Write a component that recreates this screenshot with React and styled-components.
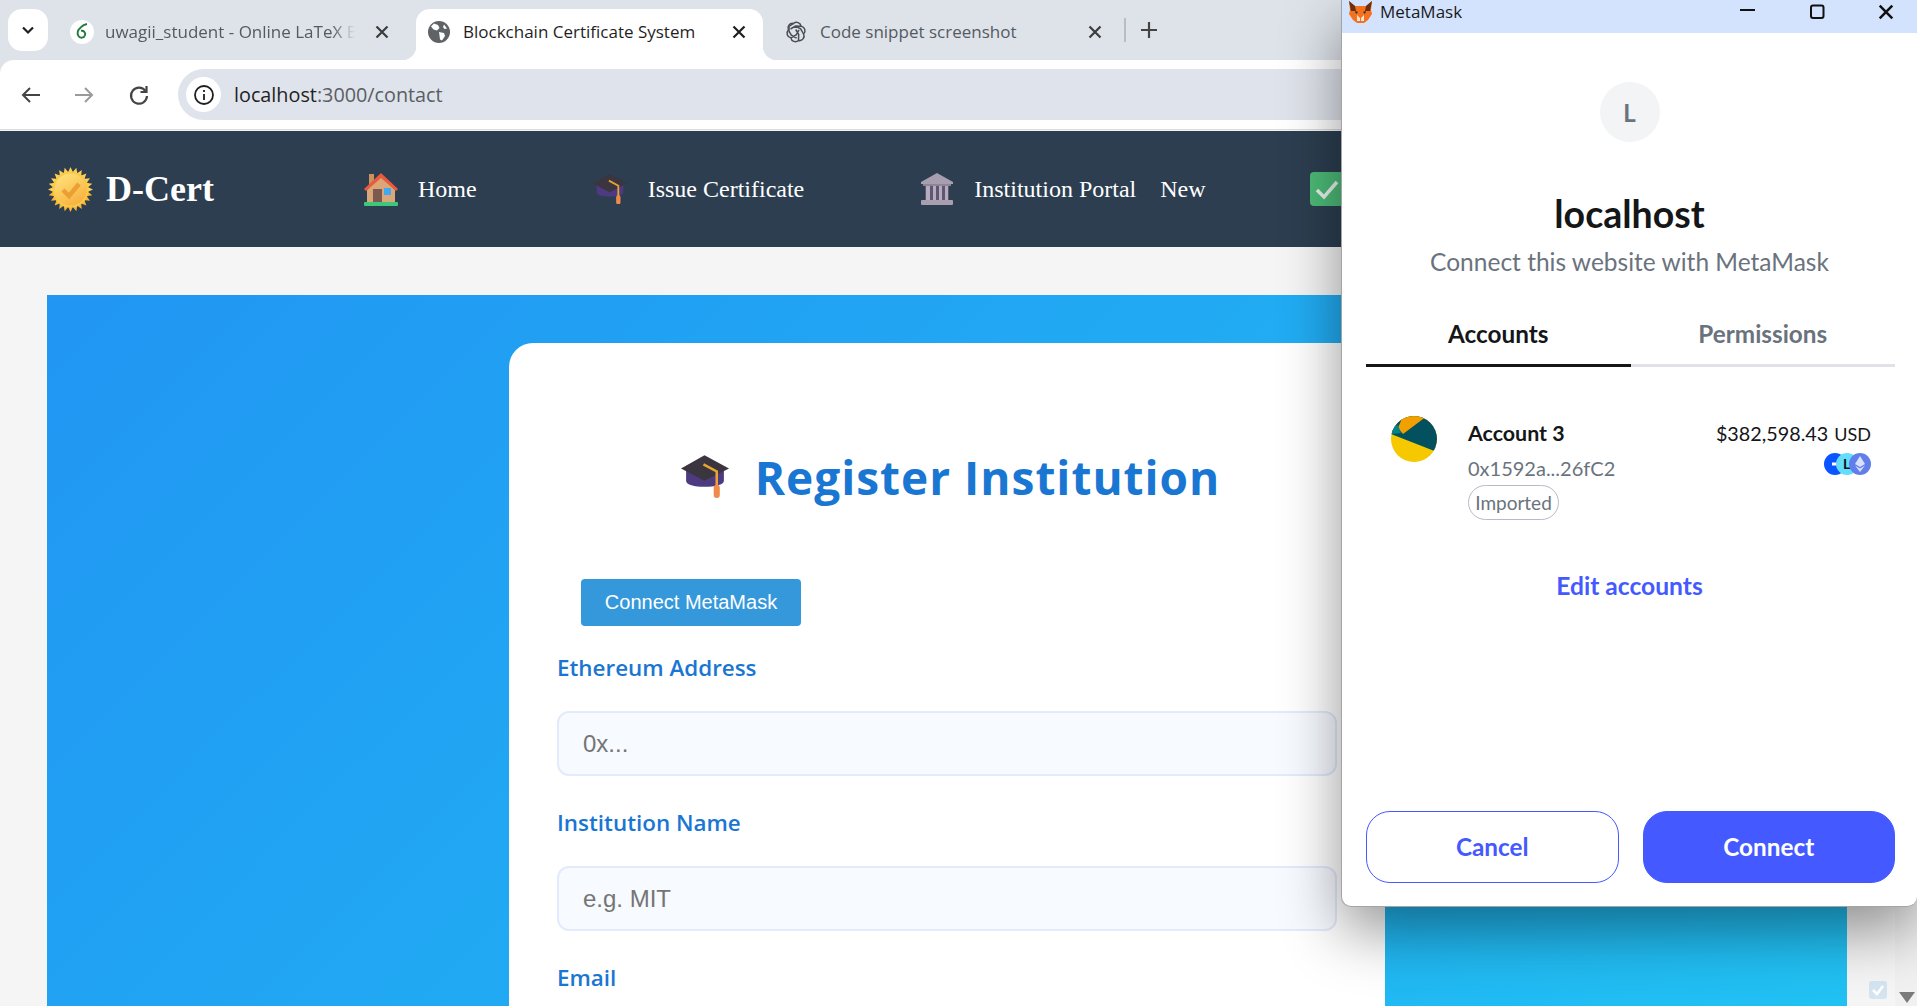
import styled, { createGlobalStyle } from "styled-components"

const GlobalStyle = createGlobalStyle`
    html, body {
        margin:0;
        padding:0;
        height:1006px;
        overflow:hidden;
        background:#f5f5f5;
    }
    * { box-sizing:border-box; }
`;

const UI = `"Open Sans", "Noto Sans", sans-serif`;
const MM = `Lato, "Open Sans", sans-serif`;

const Screen = styled.div`
    position:relative;
    width:1917px;
    height:1006px;
    overflow:hidden;
    background:#f5f5f5;
`;

/* browser chrome */
const BrowserChrome = styled.div`
    background:#dee3ea;
    font-family:${UI};
`;

const TabStrip = styled.div`
    height:60px;
    display:flex;
    align-items:flex-end;
    padding-left:8px;
`;

const TabMenu = styled.div`
    width:40px;
    height:42px;
    margin-bottom:9px;
    margin-right:15px;
    background:#fff;
    border-radius:14px;
    display:flex;
    align-items:center;
    justify-content:center;
`;

const Tab = styled.div`
    position:relative;
    width:${(props) => props.$width}px;
    height:51px;
    display:flex;
    align-items:center;
    padding:0 ${(props) => props.$padRight}px 6px ${(props) => props.$pad}px;
    border-radius:14px 14px 0 0;
    background:${(props) => (props.$active ? "#fff" : "transparent")};
    color:${(props) => (props.$active ? "#1f1f1f" : "#555a60")};
    font-size:17px;

    ${(props) => props.$active && `
        &::before, &::after {
            content:"";
            position:absolute;
            bottom:0;
            width:14px;
            height:14px;
        }
        &::before {
            left:-14px;
            background:radial-gradient(circle at 0 0, transparent 14px, #fff 14.5px);
        }
        &::after {
            right:-14px;
            background:radial-gradient(circle at 100% 0, transparent 14px, #fff 14.5px);
        }
    `}
`;

const TabIcon = styled.div`
    width:24px;
    height:24px;
    flex:none;
    margin-right:${(props) => props.$gap}px;
`;

const TabTitle = styled.div`
    flex:1;
    white-space:nowrap;
    overflow:hidden;
    ${(props) => props.$fade && `
        -webkit-mask-image:linear-gradient(90deg, #000 88%, transparent 97%);
        mask-image:linear-gradient(90deg, #000 88%, transparent 97%);
        margin-right:12px;
    `}
`;

const TabDivider = styled.div`
    width:2px;
    height:24px;
    margin:0 13px 18px 0;
    background:#b9bdc3;
`;

const NewTab = styled.div`
    width:20px;
    height:20px;
    margin-bottom:20px;
`;

const Toolbar = styled.div`
    height:70px;
    background:#fff;
    border-radius:14px 14px 0 0;
    border-bottom:1px solid #dcdcdc;
    display:flex;
    align-items:center;
    padding-left:19px;
`;

const NavButton = styled.div`
    width:24px;
    height:24px;
    margin-right:${(props) => props.$gap}px;
    flex:none;
`;

const Omnibox = styled.div`
    flex:1;
    height:51px;
    background:#dfe3eb;
    border-radius:26px 0 0 26px;
    display:flex;
    align-items:center;
    padding-left:8px;
    font-size:19.8px;
    color:#5a5e64;
`;

const InfoChip = styled.div`
    width:35px;
    height:35px;
    border-radius:50%;
    background:#fff;
    margin-right:13px;
    display:flex;
    align-items:center;
    justify-content:center;
`;

const Host = styled.span`
    color:#1f1f1f;
`;

/* d-cert navbar */
const Navbar = styled.nav`
    height:116px;
    margin-top:1px;
    background:#2c3e50;
    display:flex;
    align-items:center;
    padding-left:48px;
    font-family:"Liberation Serif", serif;
    color:#fff;
`;

const Brand = styled.div`
    display:flex;
    align-items:center;
    gap:13px;
    width:316px;
    font-size:36px;
    font-weight:700;
`;

const NavItem = styled.div`
    display:flex;
    align-items:center;
    gap:${(props) => props.$gap}px;
    margin-right:${(props) => props.$right}px;
    font-size:24px;
    white-space:nowrap;
`;

const NewLabel = styled.span`
    margin-left:24px;
`;

/* page */
const Panel = styled.div`
    margin:48px 0 0 47px;
    width:1800px;
    height:1300px;
    padding-top:48px;
    background:linear-gradient(135deg, #2196f3, #21cbf3);
`;

const Card = styled.div`
    width:876px;
    margin:0 auto;
    height:1100px;
    padding:106px 48px 0;
    background:#fff;
    border-radius:24px;
    font-family:${UI};
`;

const Title = styled.h1`
    margin:0 0 74px;
    padding-left:7px;
    height:56px;
    display:flex;
    align-items:center;
    justify-content:center;
    gap:26px;
    font-size:46px;
    font-weight:700;
    letter-spacing:1px;
    color:#1976d2;
`;

const ConnectMeta = styled.button`
    display:block;
    width:220px;
    height:47px;
    margin:0 0 27px 24px;
    border:none;
    border-radius:4px;
    background:#3498db;
    color:#fff;
    font-family:"Liberation Sans", sans-serif;
    font-size:20px;
`;

const Field = styled.div`
    height:155px;
`;

const Label = styled.div`
    height:30px;
    line-height:30px;
    margin-bottom:28px;
    font-size:22.4px;
    font-weight:600;
    color:#1976d2;
`;

const Input = styled.div`
    height:65px;
    border:2px solid #e3eafc;
    border-radius:12px;
    background:#f7faff;
    display:flex;
    align-items:center;
    padding-left:24px;
    font-family:"Liberation Sans", sans-serif;
    font-size:24px;
    color:#757575;
`;

const ScrollTrack = styled.div`
    position:absolute;
    right:0;
    top:131px;
    bottom:0;
    width:22px;
    background:#f1f1f1;
`;

const CornerCheck = styled.div`
    position:absolute;
    left:1869px;
    top:981px;
    width:18px;
    height:18px;
    border-radius:3px;
    background:#d5e4f1;
    display:flex;
    align-items:center;
    justify-content:center;
`;

const ScrollArrow = styled.div`
    position:absolute;
    left:1899px;
    top:992px;
    width:0;
    height:0;
    border-left:8px solid transparent;
    border-right:8px solid transparent;
    border-top:11px solid #7b7b7b;
`;

/* metamask popup */
const Popup = styled.div`
    position:absolute;
    left:1341px;
    top:0;
    width:576px;
    height:907px;
    display:flex;
    flex-direction:column;
    background:#fff;
    border:1px solid #a4a4a4;
    border-width:0 0 1px 1px;
    border-radius:0 0 10px 10px;
    box-shadow:0 24px 60px rgba(0,0,0,.42);
    font-family:${MM};
`;

const TitleBar = styled.div`
    height:33px;
    flex:none;
    background:#d3e3fd;
    display:flex;
    align-items:center;
    padding:0 23px 9px 7px;
    font-family:${UI};
    font-size:17px;
    color:#1a1a1a;
`;

const TitleText = styled.div`
    flex:1;
    margin-left:8px;
    margin-top:-2px;
`;

const WinButton = styled.div`
    width:16px;
    height:16px;
    margin-left:${(props) => props.$left}px;
    display:flex;
    align-items:center;
`;

const Origin = styled.div`
    display:flex;
    flex-direction:column;
    align-items:center;
`;

const Avatar = styled.div`
    width:60px;
    height:60px;
    margin-top:49px;
    border-radius:50%;
    background:#f2f4f6;
    color:#6a737d;
    font-size:24px;
    font-weight:700;
    display:flex;
    align-items:center;
    justify-content:center;
`;

const Host2 = styled.div`
    margin-top:50px;
    height:44px;
    line-height:44px;
    font-size:37.5px;
    font-weight:700;
    color:#141618;
`;

const Sub = styled.div`
    margin-top:11px;
    height:30px;
    line-height:30px;
    font-size:24.5px;
    color:#6a737d;
`;

const Tabs = styled.div`
    display:flex;
    margin:35px 22px 0 24px;
    border-bottom:3px solid #e0e2e8;
`;

const TabBtn = styled.div`
    flex:1;
    height:55px;
    margin-bottom:-3px;
    border-bottom:3px solid ${(props) => (props.$active ? "#141618" : "transparent")};
    display:flex;
    align-items:center;
    justify-content:center;
    padding-bottom:10px;
    font-size:24.3px;
    font-weight:700;
    color:${(props) => (props.$active ? "#141618" : "#6a737d")};
`;

const AccountRow = styled.div`
    display:flex;
    margin:49px 46px 0 49px;
`;

const Blockie = styled.div`
    width:46px;
    height:46px;
    flex:none;
    margin-right:31px;
`;

const AccountInfo = styled.div`
    flex:1;
`;

const AccountName = styled.div`
    height:36px;
    line-height:34px;
    font-size:21.4px;
    font-weight:700;
    color:#141618;
`;

const Address = styled.div`
    height:33px;
    line-height:32px;
    font-size:20px;
    color:#6a737d;
`;

const Pill = styled.div`
    width:91px;
    height:35px;
    border:1px solid #b7bbc8;
    border-radius:18px;
    display:flex;
    align-items:center;
    justify-content:center;
    font-size:19px;
    color:#6a737d;
`;

const Balance = styled.div`
    display:flex;
    flex-direction:column;
    align-items:flex-end;
`;

const Amount = styled.div`
    height:37px;
    line-height:34px;
    font-size:19.8px;
    color:#141618;
`;

const Usd = styled.span`
    margin-left:6px;
    font-size:18px;
`;

const EditLink = styled.div`
    margin-top:51px;
    text-align:center;
    font-size:24.6px;
    font-weight:700;
    color:#4459ff;
`;

const Footer = styled.div`
    display:flex;
    gap:24px;
    margin:auto 22px 23px 24px;
`;

const FootButton = styled.div`
    flex:1;
    height:72px;
    padding-bottom:2px;
    border-radius:24px;
    border:1px solid #4459ff;
    background:${(props) => (props.$primary ? "#4459ff" : "#fff")};
    color:${(props) => (props.$primary ? "#fff" : "#4459ff")};
    display:flex;
    align-items:center;
    justify-content:center;
    font-size:24.3px;
    font-weight:700;
`;

const Chevron = () => (
    <svg width="16" height="16" viewBox="0 0 16 16" fill="none" stroke="#1f1f1f" strokeWidth="2.2">
        <path d="M3 5.5l5 5 5-5" />
    </svg>
)

const CloseIcon = ({ color = "#3c3c3c", size = 14 }) => (
    <svg width={size} height={size} viewBox="0 0 14 14" stroke={color} strokeWidth="2.2" style={{ flex: "none" }}>
        <path d="M1.5 1.5l11 11M12.5 1.5l-11 11" />
    </svg>
)

const OverleafIcon = () => (
    <svg width="24" height="24" viewBox="0 0 24 24">
        <circle cx="12" cy="12" r="12" fill="#fff" />
        <path d="M17 4c-3 .6-4.5 1.600-6 3.200C7.500 10 7 13.500 8.500 16c1.600 2.500 5.500 2.200 6.500-.8 .8-2.600-1.200-5-4-4.400" fill="none" stroke="#1f7a3d" strokeWidth="1.900" />
    </svg>
)

const GlobeIcon = () => (
    <svg width="24" height="24" viewBox="0 0 24 24">
        <circle cx="12" cy="12" r="11" fill="#5f6368" />
        <path d="M7 3.500l4 1.500 1.500 3-2.500 2.500-3.500-1-2.500-3zM12 12l5 1 1 3-3 4.500-2-1-.5-4zM17 4.500l3 4-2.500 .5-1.500-2z" fill="#fff" />
    </svg>
)

const OpenAiIcon = () => (
    <svg width="24" height="24" viewBox="0 0 24 24" fill="none" stroke="#4a4d52" strokeWidth="1.500">
        <path d="M9.500 3.500a4.600 4.600 0 0 1 7.600 2.700 4.600 4.600 0 0 1 2.500 7.800 4.600 4.600 0 0 1-5.100 6.500 4.600 4.600 0 0 1-7.600-2.700 4.600 4.600 0 0 1-2.500-7.800 4.600 4.600 0 0 1 5.100-6.500z" />
        <path d="M9.500 3.500L5 6.500v6M17.100 6.200l-5.600-.2-5 3M19.600 14l-3-5.200-5.300-2.600M14.500 20.500l.2-6-3-5M6.900 17.800l5.200-2.800 2.900-5.200M4.400 10l2.900 5.200 5.300 2.800" />
    </svg>
)

const BackIcon = ({ color }) => (
    <svg width="24" height="24" viewBox="0 0 24 24" fill="none" stroke={color} strokeWidth="2">
        <path d="M21 12H4M11 5l-7 7 7 7" />
    </svg>
)

const ForwardIcon = ({ color }) => (
    <svg width="24" height="24" viewBox="0 0 24 24" fill="none" stroke={color} strokeWidth="2">
        <path d="M3 12h17M13 5l7 7-7 7" />
    </svg>
)

const ReloadIcon = () => (
    <svg width="24" height="24" viewBox="0 0 24 24" fill="none" stroke="#444" strokeWidth="2.200">
        <path d="M18.500 8A8 8 0 1 0 20 13" />
        <path d="M19.500 3v6h-6" />
    </svg>
)

const InfoIcon = () => (
    <svg width="22" height="22" viewBox="0 0 22 22" fill="none" stroke="#1f1f1f" strokeWidth="1.800">
        <circle cx="11" cy="11" r="9" />
        <path d="M11 10v6M11 6v2" />
    </svg>
)

const SunLogo = () => {
    const spikes = Array.from({ length: 24 }, (_, i) => i * 15)
    return (
        <svg width="45" height="45" viewBox="0 0 45 45">
            <defs>
                <linearGradient id="sun" x1="0.2" y1="0" x2="0.8" y2="1">
                    <stop offset="0" stopColor="#ffe27a" />
                    <stop offset="1" stopColor="#f7ae3c" />
                </linearGradient>
            </defs>
            {spikes.map((a) => (
                <path key={a} d="M22.500 0l3.200 7h-6.400z" fill={a > 90 && a < 270 ? "#f8b63c" : "#fdd05a"} transform={`rotate(${a} 22.500 22.500)`} />
            ))}
            <circle cx="22.500" cy="22.500" r="18" fill="#fcc945" />
            <circle cx="22.500" cy="22.500" r="16" fill="url(#sun)" />
            <path d="M15 23l6 6 10-12" fill="none" stroke="#ec9f32" strokeWidth="4.500" />
        </svg>
    )
}

const HouseIcon = () => (
    <svg width="34" height="33" viewBox="0 0 34 33">
        <rect x="5" y="1" width="5" height="14" fill="#c8935f" />
        <path d="M3 17L17 3l14 14v12H3z" fill="#dba778" />
        <path d="M0 16L17 0l17 16-2 2L17 5 2 18z" fill="#ea5a3c" />
        <rect x="9" y="16" width="9" height="13" fill="#7d5a50" />
        <rect x="20" y="15" width="7" height="7" fill="#3fa9f5" />
        <rect y="29" width="34" height="4" rx="1" fill="#3cc878" />
    </svg>
)

const CapIcon = ({ size = 34 }) => (
    <svg width={size} height={size * 0.9} viewBox="0 0 47 42">
        <path d="M5 15v10c0 4 8 6 18 6s19-2 19-6V15z" fill="#4e3a80" />
        <path d="M0 13L23 0l24 13-24 12z" fill="#3b3540" />
        <path d="M22 9l13 7v14" fill="none" stroke="#e8a431" strokeWidth="2.500" />
        <rect x="32" y="29" width="6" height="13" rx="3" fill="#f08a4b" />
    </svg>
)

const BankIcon = () => (
    <svg width="32" height="32" viewBox="0 0 32 32">
        <path d="M16 0l16 9v2H0V9z" fill="#a79fb0" />
        <rect x="2" y="11" width="28" height="2" fill="#8e8698" />
        <rect x="4" y="13" width="24" height="14" fill="#5e5672" />
        <path d="M5 13h4v14H5zM12 13h3v14h-3zM18 13h3v14h-3zM24 13h3v14h-3z" fill="#b5adbe" />
        <rect y="27" width="32" height="5" rx="1" fill="#a79fb0" />
    </svg>
)

const CheckTile = () => (
    <svg width="34" height="34" viewBox="0 0 34 34">
        <rect width="34" height="34" rx="4" fill="#4dbb78" />
        <path d="M7 18l7 7 13-15" fill="none" stroke="#e8f3ec" strokeWidth="3.500" />
    </svg>
)

const Fox = () => (
    <svg width="23" height="22" viewBox="0 0 23 22">
        <path d="M0 0l6 5h11l6-5-1 9 1 4-4 6-4 3H8l-4-3-4-6 1-4z" fill="#f4721e" />
        <path d="M0 0l6 5 1 5-5 0zM23 0l-6 5-1 5 5 0z" fill="#6a2f12" />
        <path d="M8 14l3 3v3H8zM15 14l-3 3v3h3z" fill="#f7e1d0" />
        <path d="M6 10l3 1-2 2zM17 10l-3 1 2 2z" fill="#2b2b2b" />
    </svg>
)

const MinIcon = () => (
    <svg width="16" height="16" viewBox="0 0 16 16" stroke="#111" strokeWidth="2"><path d="M0 6h15" /></svg>
)

const MaxIcon = () => (
    <svg width="16" height="16" viewBox="0 0 16 16" fill="none" stroke="#111" strokeWidth="2"><rect x="2" y="1.500" width="12.500" height="12.500" rx="2" /></svg>
)

const BlockieIcon = () => (
    <svg width="46" height="46" viewBox="0 0 46 46">
        <clipPath id="bl"><circle cx="23" cy="23" r="23" /></clipPath>
        <g clipPath="url(#bl)">
            <rect width="46" height="46" fill="#f5c800" />
            <path d="M0 18L46 36V0H0z" fill="#03505e" />
            <path d="M7 12L12 0h24L12 18z" fill="#f2a000" />
            <path d="M0 18l2-7 5-2 3 8z" fill="#028388" />
        </g>
    </svg>
)

const NetworkIcons = () => (
    <svg width="47" height="22" viewBox="0 0 47 22">
        <circle cx="11" cy="11" r="11" fill="#0a55ff" />
        <path d="M8 11h10" stroke="#fff" strokeWidth="3" />
        <circle cx="23" cy="11" r="11" fill="#62defa" />
        <text x="19" y="16" fontSize="14" fontWeight="700" fontFamily="Lato, sans-serif" fill="#111">L</text>
        <circle cx="36" cy="11" r="11" fill="#627eea" />
        <path d="M36 3l-5 8 5 3 5-3zM31 12.500l5 6.500 5-6.500-5 3z" fill="#d9e0fb" />
    </svg>
)

const TinyCheck = () => (
    <svg width="14" height="14" viewBox="0 0 14 14" fill="none" stroke="#fff" strokeWidth="2.500"><path d="M2 7l4 4 6-8" /></svg>
)

const Plus = () => (
    <svg width="20" height="20" viewBox="0 0 20 20" stroke="#444" strokeWidth="2.200"><path d="M10 2v16M2 10h16" /></svg>
)

const App = () => {
    return (
        <Screen>
            <GlobalStyle />
            <BrowserChrome>
                <TabStrip>
                    <TabMenu><Chevron /></TabMenu>
                    <Tab $width={353} $pad={7} $padRight={27}>
                        <TabIcon $gap={11}><OverleafIcon /></TabIcon>
                        <TabTitle $fade>uwagii_student - Online LaTeX E</TabTitle>
                        <CloseIcon />
                    </Tab>
                    <Tab $active $width={347} $pad={11} $padRight={17}>
                        <TabIcon $gap={12}><GlobeIcon /></TabIcon>
                        <TabTitle>Blockchain Certificate System</TabTitle>
                        <CloseIcon color="#1f1f1f" />
                    </Tab>
                    <Tab $width={361} $pad={21} $padRight={22}>
                        <TabIcon $gap={12}><OpenAiIcon /></TabIcon>
                        <TabTitle>Code snippet screenshot</TabTitle>
                        <CloseIcon />
                    </Tab>
                    <TabDivider />
                    <NewTab><Plus /></NewTab>
                </TabStrip>
                <Toolbar>
                    <NavButton $gap={29}><BackIcon color="#444" /></NavButton>
                    <NavButton $gap={31}><ForwardIcon color="#9a9a9a" /></NavButton>
                    <NavButton $gap={27}><ReloadIcon /></NavButton>
                    <Omnibox>
                        <InfoChip><InfoIcon /></InfoChip>
                        <Host>localhost</Host>:3000/contact
                    </Omnibox>
                </Toolbar>
            </BrowserChrome>
            <Navbar>
                <Brand><SunLogo />D-Cert</Brand>
                <NavItem $gap={20} $right={116}><HouseIcon /><span>Home</span></NavItem>
                <NavItem $gap={21} $right={117}><CapIcon /><span>Issue Certificate</span></NavItem>
                <NavItem $gap={21} $right={104}><BankIcon /><span>Institution Portal<NewLabel>New</NewLabel></span></NavItem>
                <NavItem $gap={20} $right={0}><CheckTile /></NavItem>
            </Navbar>
            <Panel>
                <Card>
                    <Title><CapIcon size={48} />Register Institution</Title>
                    <ConnectMeta>Connect MetaMask</ConnectMeta>
                    <Field>
                        <Label>Ethereum Address</Label>
                        <Input>0x...</Input>
                    </Field>
                    <Field>
                        <Label>Institution Name</Label>
                        <Input>e.g. MIT</Input>
                    </Field>
                    <Field>
                        <Label>Email</Label>
                    </Field>
                </Card>
            </Panel>
            <ScrollTrack />
            <CornerCheck><TinyCheck /></CornerCheck>
            <ScrollArrow />
            <Popup>
                <TitleBar>
                    <Fox />
                    <TitleText>MetaMask</TitleText>
                    <WinButton $left={0}><MinIcon /></WinButton>
                    <WinButton $left={53}><MaxIcon /></WinButton>
                    <WinButton $left={53}><CloseIcon color="#111" size={16} /></WinButton>
                </TitleBar>
                <Origin>
                    <Avatar>L</Avatar>
                    <Host2>localhost</Host2>
                    <Sub>Connect this website with MetaMask</Sub>
                </Origin>
                <Tabs>
                    <TabBtn $active>Accounts</TabBtn>
                    <TabBtn>Permissions</TabBtn>
                </Tabs>
                <AccountRow>
                    <Blockie><BlockieIcon /></Blockie>
                    <AccountInfo>
                        <AccountName>Account 3</AccountName>
                        <Address>0x1592a...26fC2</Address>
                        <Pill>Imported</Pill>
                    </AccountInfo>
                    <Balance>
                        <Amount>$382,598.43<Usd>USD</Usd></Amount>
                        <NetworkIcons />
                    </Balance>
                </AccountRow>
                <EditLink>Edit accounts</EditLink>
                <Footer>
                    <FootButton>Cancel</FootButton>
                    <FootButton $primary>Connect</FootButton>
                </Footer>
            </Popup>
        </Screen>
    )
}

export default App
